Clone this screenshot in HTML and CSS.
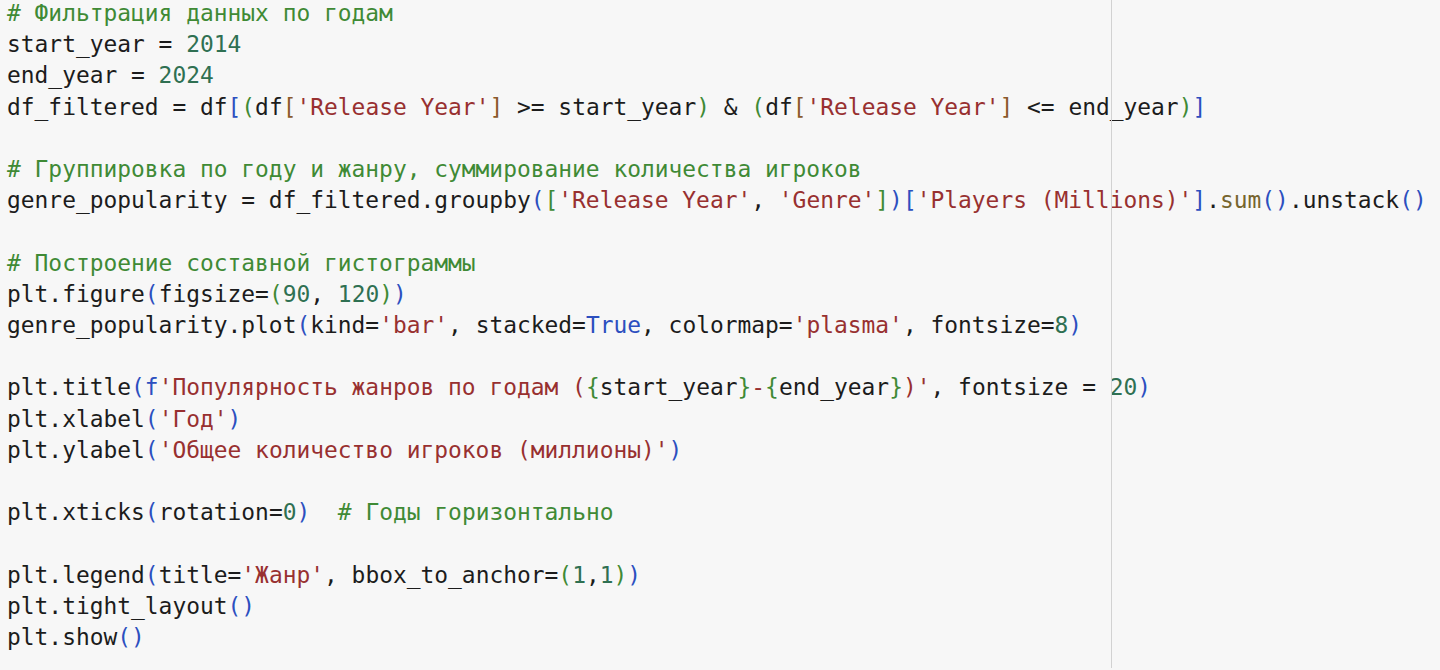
FILE: index.html
```html
<!DOCTYPE html>
<html lang="ru">
<head>
<meta charset="utf-8">
<title>code</title>
<link rel="stylesheet" href="styles.css">
</head>
<body>
<div class="editor">
<div class="ruler"></div>
<pre class="code"><span class="c"># Фильтрация данных по годам</span>
start_year = <span class="n">2014</span>
end_year = <span class="n">2024</span>
df_filtered = df<span class="b1">[</span><span class="b2">(</span>df<span class="b3">[</span><span class="s">'Release Year'</span><span class="b3">]</span> &gt;= start_year<span class="b2">)</span> &amp; <span class="b2">(</span>df<span class="b3">[</span><span class="s">'Release Year'</span><span class="b3">]</span> &lt;= end_year<span class="b2">)</span><span class="b1">]</span>

<span class="c"># Группировка по году и жанру, суммирование количества игроков</span>
genre_popularity = df_filtered.groupby<span class="b1">(</span><span class="b2">[</span><span class="s">'Release Year'</span>, <span class="s">'Genre'</span><span class="b2">]</span><span class="b1">)</span><span class="b1">[</span><span class="s">'Players (Millions)'</span><span class="b1">]</span>.<span class="f">sum</span><span class="b1">()</span>.unstack<span class="b1">()</span>

<span class="c"># Построение составной гистограммы</span>
plt.figure<span class="b1">(</span>figsize=<span class="b2">(</span><span class="n">90</span>, <span class="n">120</span><span class="b2">)</span><span class="b1">)</span>
genre_popularity.plot<span class="b1">(</span>kind=<span class="s">'bar'</span>, stacked=<span class="k">True</span>, colormap=<span class="s">'plasma'</span>, fontsize=<span class="n">8</span><span class="b1">)</span>

plt.title<span class="b1">(</span><span class="k">f</span><span class="s">'Популярность жанров по годам (</span><span class="b2">{</span>start_year<span class="b2">}</span><span class="s">-</span><span class="b2">{</span>end_year<span class="b2">}</span><span class="s">)'</span>, fontsize = <span class="n">20</span><span class="b1">)</span>
plt.xlabel<span class="b1">(</span><span class="s">'Год'</span><span class="b1">)</span>
plt.ylabel<span class="b1">(</span><span class="s">'Общее количество игроков (миллионы)'</span><span class="b1">)</span>

plt.xticks<span class="b1">(</span>rotation=<span class="n">0</span><span class="b1">)</span>  <span class="c"># Годы горизонтально</span>

plt.legend<span class="b1">(</span>title=<span class="s">'Жанр'</span>, bbox_to_anchor=<span class="b2">(</span><span class="n">1</span>,<span class="n">1</span><span class="b2">)</span><span class="b1">)</span>
plt.tight_layout<span class="b1">()</span>
plt.show<span class="b1">()</span></pre>
</div>
</body>
</html>
```

FILE: styles.css
```css
html, body {
  margin: 0;
  padding: 0;
  background: #f7f7f7;
}
body {
  width: 1440px;
  height: 670px;
  overflow: hidden;
}
.editor {
  position: relative;
  height: 670px;
  padding-left: 7px;
}
.ruler {
  position: absolute;
  left: 1111px;
  top: 0;
  bottom: 0;
  width: 1px;
  background: #d2d2d2;
}
.code {
  margin: -2px 0 0 0;
  font-family: "DejaVu Sans Mono", "Liberation Mono", monospace;
  font-size: 22.9px;
  line-height: 31.2px;
  color: #1c1c1c;
  white-space: pre;
}
.c { color: #3f8a35; }
.n { color: #2f7052; }
.s { color: #983030; }
.k { color: #2c4fbf; }
.f { color: #76652e; }
.b1 { color: #2c4fbf; }
.b2 { color: #3f8a35; }
.b3 { color: #8b5a2b; }
```
